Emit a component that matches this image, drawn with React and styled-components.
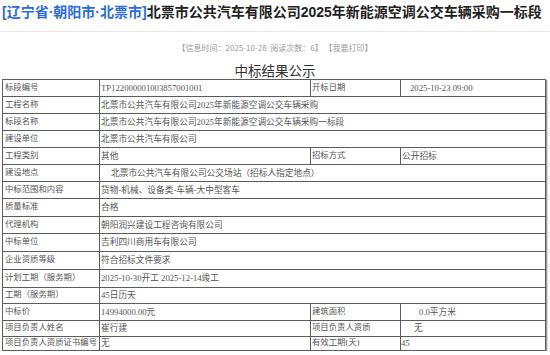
import React from "react";
import styled, { createGlobalStyle } from "styled-components";

const GlobalStyle = createGlobalStyle`
  body {
    margin: 0;
    background: #fff;
    font-family: "Noto Sans CJK SC", sans-serif;
  }
`;

const Page = styled.div`
  width: 550px;
`;

const Title = styled.h1`
  margin: 0;
  padding: 3px 0 0 2px;
  height: 28px;
  line-height: 18px;
  font-family: "Liberation Sans", "Noto Sans CJK SC", sans-serif;
  font-size: 14px;
  font-weight: 700;
  color: #222;
  white-space: nowrap;
  border-bottom: 1px solid #e8e8e8;
`;

const Region = styled.span`
  color: #2b6cd6;
`;

const Info = styled.div`
  margin-top: 10px;
  text-align: center;
  font-size: 8px;
  line-height: 12px;
  color: #9a9a9a;
  white-space: pre;
`;

const Heading = styled.h2`
  margin: 8px 0 0;
  text-align: center;
  font-size: 13.5px;
  line-height: 16px;
  font-weight: 400;
  color: #333;
`;

const Table = styled.table`
  margin: 1px 0 0 2px;
  width: 543px;
  table-layout: fixed;
  border-collapse: collapse;
  border: 1px solid #555;
  box-shadow: 1px 1px 0 #999, 2px 2px 0 #ddd;
`;

const Row = styled.tr`
  height: ${({ $h }) => $h}px;
`;

const Cell = styled.td`
  border: 1px solid #5c5c5c;
  padding: 0 0 0 ${({ $indent }) => $indent}px;
  font-family: "Liberation Serif", "Noto Sans CJK SC", serif;
  font-size: ${({ $label }) => ($label ? "8.4px" : "8.7px")};
  line-height: 1;
  color: #555;
  white-space: nowrap;
  overflow: hidden;
  vertical-align: middle;
`;

// [text, colSpan, indent] — even positions are labels, odd positions values
const rows = [
  [17, [["标段编号", 1, 2], ["TP122000001003857001001", 1, 1], ["开标日期", 1, 1], ["2025-10-23 09:00", 1, 9]]],
  [17, [["工程名称", 1, 2], ["北票市公共汽车有限公司2025年新能源空调公交车辆采购", 3, 1]]],
  [17, [["标段名称", 1, 2], ["北票市公共汽车有限公司2025年新能源空调公交车辆采购一标段", 3, 1]]],
  [17, [["建设单位", 1, 2], ["北票市公共汽车有限公司", 3, 1]]],
  [17, [["工程类别", 1, 2], ["其他", 1, 1], ["招标方式", 1, 1], ["公开招标", 1, 1]]],
  [17, [["建设地点", 1, 2], ["北票市公共汽车有限公司公交场站（招标人指定地点）", 3, 11]]],
  [17, [["中标范围和内容", 1, 2], ["货物-机械、设备类-车辆-大中型客车", 3, 1]]],
  [18, [["质量标准", 1, 2], ["合格", 3, 1]]],
  [17, [["代理机构", 1, 2], ["朝阳润兴建设工程咨询有限公司", 3, 1]]],
  [18, [["中标单位", 1, 2], ["吉利四川商用车有限公司", 3, 1]]],
  [18, [["企业资质等级", 1, 2], ["符合招标文件要求", 3, 1]]],
  [18, [["计划工期（服务期）", 1, 2], ["2025-10-30开工 2025-12-14竣工", 3, 1]]],
  [16, [["工期（服务期）", 1, 2], ["45日历天", 3, 1]]],
  [17, [["中标价", 1, 2], ["14994000.00元", 1, 1], ["建筑面积", 1, 1], ["0.0平方米", 1, 18]]],
  [16, [["项目负责人姓名", 1, 2], ["崔行建", 1, 1], ["项目负责人资质", 1, 1], ["无", 1, 13]]],
  [14, [["项目负责人资质证书编号", 1, 2], ["无", 1, 1], ["有效工期(天)", 1, 1], ["45", 1, 0]]],
];

const App = () => (
  <Page>
    <GlobalStyle />
    <Title>
      <Region>[辽宁省·朝阳市·北票市]</Region>北票市公共汽车有限公司2025年新能源空调公交车辆采购一标段
    </Title>
    <Info>{"【信息时间：2025-10-28  阅读次数：6】 【我要打印】"}</Info>
    <Heading>中标结果公示</Heading>
    <Table>
      <colgroup>
        <col style={{ width: 97 }} />
        <col style={{ width: 211 }} />
        <col style={{ width: 90 }} />
        <col style={{ width: 145 }} />
      </colgroup>
      <tbody>
        {rows.map(([h, cells], i) => (
          <Row key={i} $h={h}>
            {cells.map(([text, span, indent], j) => (
              <Cell key={j} colSpan={span} $indent={indent} $label={j % 2 === 0}>
                {text}
              </Cell>
            ))}
          </Row>
        ))}
      </tbody>
    </Table>
  </Page>
);

export default App;
